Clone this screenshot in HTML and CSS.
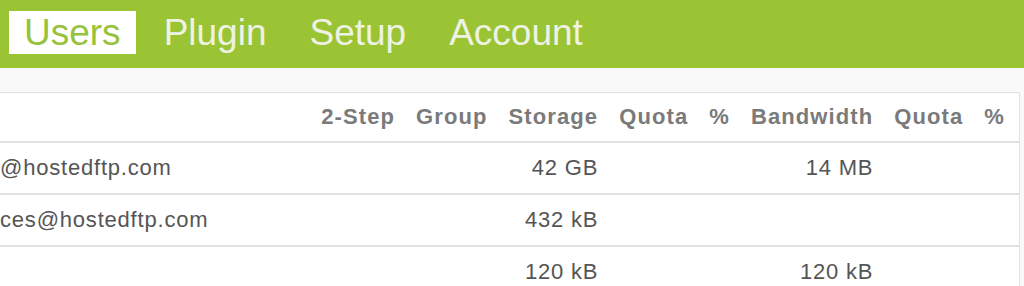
FILE: index.html
```html
<!DOCTYPE html>
<html lang="en">
<head>
    <meta charset="UTF-8">
    <title>Users</title>
    <link rel="stylesheet" href="styles.css">
</head>
<body>
<ul id="nav">
    <li class="active">Users</li>
    <li>Plugin</li>
    <li>Setup</li>
    <li>Account</li>
</ul>
<div id="main">
    <table id="users">
        <thead>
        <tr>
            <th class="user"></th>
            <th>2-Step</th>
            <th>Group</th>
            <th>Storage</th>
            <th>Quota</th>
            <th>%</th>
            <th>Bandwidth</th>
            <th>Quota</th>
            <th class="last">%</th>
        </tr>
        </thead>
        <tbody>
        <tr>
            <td class="user">@hostedftp.com</td>
            <td></td>
            <td></td>
            <td>42 GB</td>
            <td></td>
            <td></td>
            <td>14 MB</td>
            <td></td>
            <td class="last"></td>
        </tr>
        <tr>
            <td class="user">ces@hostedftp.com</td>
            <td></td>
            <td></td>
            <td>432 kB</td>
            <td></td>
            <td></td>
            <td></td>
            <td></td>
            <td class="last"></td>
        </tr>
        <tr>
            <td class="user"></td>
            <td></td>
            <td></td>
            <td>120 kB</td>
            <td></td>
            <td></td>
            <td>120 kB</td>
            <td></td>
            <td class="last"></td>
        </tr>
        </tbody>
    </table>
</div>
</body>
</html>
```

FILE: styles.css
```css
* {
    margin: 0;
    padding: 0;
    list-style: none;
}

body {
    font-family: "Liberation Sans", Arial, sans-serif;
    background-color: #f9f9f9;
    overflow: hidden;
}

#nav {
    display: flex;
    gap: 13px;
    height: 68px;
    padding: 11px 0 0 9px;
    box-sizing: border-box;
    background-color: #9ac433;
}

#nav li {
    height: 43px;
    line-height: 43px;
    padding: 0 15px;
    font-size: 37px;
    color: #edf2e3;
}

#nav li.active {
    background-color: #fff;
    color: #97c23c;
}

#main {
    padding: 24px 4px 0 0;
}

#users {
    width: 100%;
    border-collapse: collapse;
    background-color: #fff;
    border-top: 1px solid #e2e2e2;
    border-right: 1px solid #e2e2e2;
}

#users th,
#users td {
    padding: 0 10px 0 11px;
    text-align: right;
    white-space: nowrap;
    font-size: 22px;
    letter-spacing: 0.8px;
}

#users th {
    height: 48px;
    color: #7a7a7a;
    letter-spacing: 1.1px;
    border-bottom: 2px solid #e2e2e2;
}

#users td {
    height: 50px;
    color: #555;
    border-bottom: 2px solid #e2e2e2;
}

#users .user {
    width: 100%;
    padding-left: 0;
    text-align: left;
}

#users .last {
    padding-right: 14px;
}
```
